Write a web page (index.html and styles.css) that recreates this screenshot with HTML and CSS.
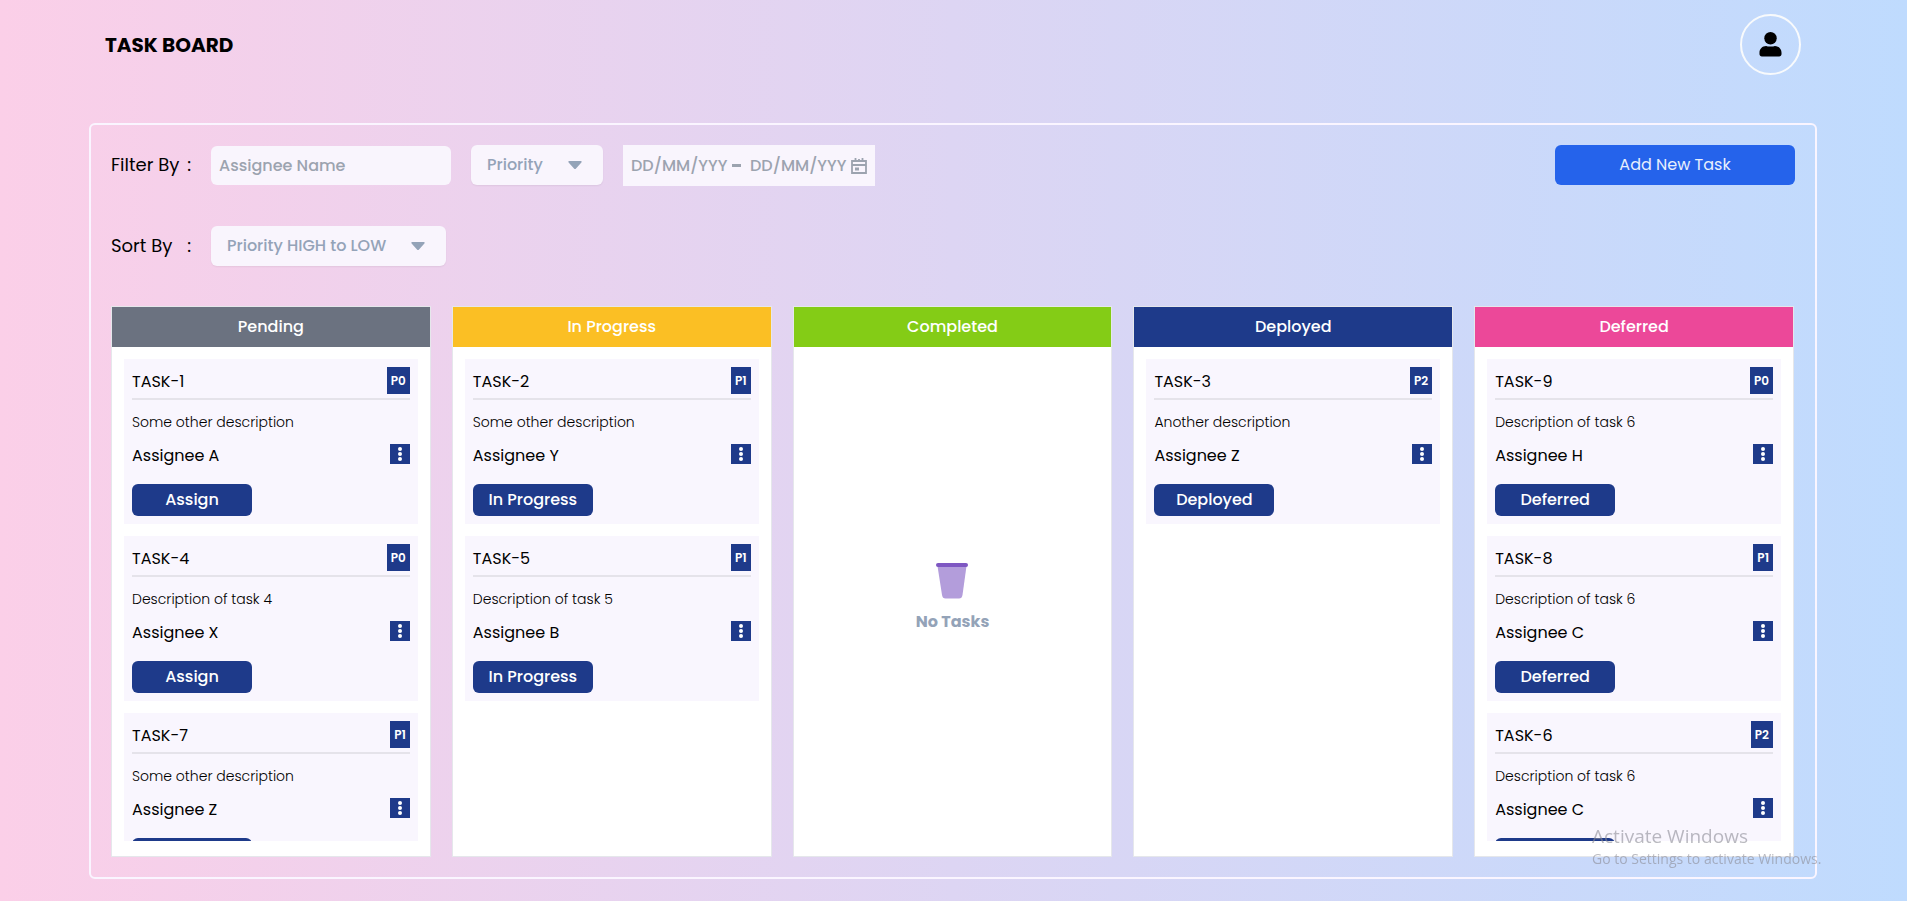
FILE: index.html
```html
<!DOCTYPE html>
<html lang="en">
<head>
<meta charset="utf-8">
<meta name="viewport" content="width=device-width, initial-scale=1">
<title>Task Board</title>
<link rel="stylesheet" href="styles.css">
</head>
<body>
<svg class="sprite" aria-hidden="true">
  <symbol id="dots" viewBox="0 0 20 20"><circle cx="10" cy="5" r="2"/><circle cx="10" cy="10" r="2"/><circle cx="10" cy="15" r="2"/></symbol>
  <symbol id="caret" viewBox="0 0 14 8"><path d="M1.2 0h11.6c.9 0 1.2.9.6 1.5L8 7.4c-.6.7-1.400.7-2 0L.6 1.5C0 .9.300 0 1.200 0z"/></symbol>
</svg>
<div class="app">
  <header class="header">
    <h1 class="title">TASK BOARD</h1>
    <button class="avatar" type="button" aria-label="Profile">
      <svg width="23" height="25" viewBox="0 0 24 26"><circle cx="12" cy="6.500" r="6.500"/><path d="M7.500 14.500c1.500.9 7.500.9 9 0 4 0 7 3 7 7v1.500c0 1.500-1 2.500-2.500 2.500H3C1.500 25.500.5 24.500.5 23v-1.500c0-4 3-7 7-7z"/></svg>
    </button>
  </header>
  <main class="board">
    <div class="toolbar">
      <label class="label" for="assignee"><span>Filter By</span><span>:</span></label>
      <input class="field assignee" id="assignee" type="text" placeholder="Assignee Name">
      <div class="picker">
        <select class="select" aria-label="Priority"><option>Priority</option></select>
        <svg class="caret"><use href="#caret"/></svg>
      </div>
      <div class="dates">
        <input class="date" type="text" placeholder="DD/MM/YYY" aria-label="Start date">
        <span class="dash"></span>
        <input class="date" type="text" placeholder="DD/MM/YYY" aria-label="End date">
        <svg class="calendar" width="16" height="16" viewBox="0 0 16 16"><path d="M1 3h14v12H1zM1 7h14M4.500 0v4M11.500 0v4M8 1v3" fill="none" stroke="currentColor" stroke-width="1.800"/><path d="M4 9.500h4v3H4z" fill="currentColor"/></svg>
      </div>
      <button class="add" type="button">Add New Task</button>
    </div>
    <div class="toolbar">
      <label class="label" for="sort"><span>Sort By</span><span>:</span></label>
      <div class="picker wide">
        <select class="select" id="sort"><option>Priority HIGH to LOW</option></select>
        <svg class="caret"><use href="#caret"/></svg>
      </div>
    </div>
    <div class="columns">
      <section class="column">
        <h2 class="heading gray">Pending</h2>
        <div class="list">
          <article class="card"><div class="top"><h3>TASK-1</h3><span class="badge">P0</span></div><p class="desc">Some other description</p><div class="who"><span>Assignee A</span><button class="menu" type="button" aria-label="Options"><svg><use href="#dots"/></svg></button></div><button class="status" type="button">Assign</button></article>
          <article class="card"><div class="top"><h3>TASK-4</h3><span class="badge">P0</span></div><p class="desc">Description of task 4</p><div class="who"><span>Assignee X</span><button class="menu" type="button" aria-label="Options"><svg><use href="#dots"/></svg></button></div><button class="status" type="button">Assign</button></article>
          <article class="card"><div class="top"><h3>TASK-7</h3><span class="badge">P1</span></div><p class="desc">Some other description</p><div class="who"><span>Assignee Z</span><button class="menu" type="button" aria-label="Options"><svg><use href="#dots"/></svg></button></div><button class="status" type="button">Assign</button></article>
        </div>
      </section>
      <section class="column">
        <h2 class="heading amber">In Progress</h2>
        <div class="list">
          <article class="card"><div class="top"><h3>TASK-2</h3><span class="badge">P1</span></div><p class="desc">Some other description</p><div class="who"><span>Assignee Y</span><button class="menu" type="button" aria-label="Options"><svg><use href="#dots"/></svg></button></div><button class="status" type="button">In Progress</button></article>
          <article class="card"><div class="top"><h3>TASK-5</h3><span class="badge">P1</span></div><p class="desc">Description of task 5</p><div class="who"><span>Assignee B</span><button class="menu" type="button" aria-label="Options"><svg><use href="#dots"/></svg></button></div><button class="status" type="button">In Progress</button></article>
        </div>
      </section>
      <section class="column">
        <h2 class="heading lime">Completed</h2>
        <div class="empty">
          <svg width="32" height="36" viewBox="0 0 32 36"><path d="M1.500 3h29L26.500 32c-.4 2.500-1.500 3.500-3.500 3.500H9.500c-2 0-3.100-1-3.500-3.500z" fill="#b39ddb"/><rect width="32" height="4" rx="2" fill="#7e57c2"/></svg>
          <p>No Tasks</p>
        </div>
      </section>
      <section class="column">
        <h2 class="heading navy">Deployed</h2>
        <div class="list">
          <article class="card"><div class="top"><h3>TASK-3</h3><span class="badge">P2</span></div><p class="desc">Another description</p><div class="who"><span>Assignee Z</span><button class="menu" type="button" aria-label="Options"><svg><use href="#dots"/></svg></button></div><button class="status" type="button">Deployed</button></article>
        </div>
      </section>
      <section class="column">
        <h2 class="heading pink">Deferred</h2>
        <div class="list">
          <article class="card"><div class="top"><h3>TASK-9</h3><span class="badge">P0</span></div><p class="desc">Description of task 6</p><div class="who"><span>Assignee H</span><button class="menu" type="button" aria-label="Options"><svg><use href="#dots"/></svg></button></div><button class="status" type="button">Deferred</button></article>
          <article class="card"><div class="top"><h3>TASK-8</h3><span class="badge">P1</span></div><p class="desc">Description of task 6</p><div class="who"><span>Assignee C</span><button class="menu" type="button" aria-label="Options"><svg><use href="#dots"/></svg></button></div><button class="status" type="button">Deferred</button></article>
          <article class="card"><div class="top"><h3>TASK-6</h3><span class="badge">P2</span></div><p class="desc">Description of task 6</p><div class="who"><span>Assignee C</span><button class="menu" type="button" aria-label="Options"><svg><use href="#dots"/></svg></button></div><button class="status" type="button">Deferred</button></article>
        </div>
      </section>
    </div>
  </main>
</div>
<aside class="watermark"><p class="big">Activate Windows</p><p class="small">Go to Settings to activate Windows.</p></aside>
</body>
</html>
```
FILE: styles.css
```css
* { box-sizing: border-box; }
body { margin: 0; font: 16px/24px Poppins, Inter, sans-serif; color: #000; }
h1, h2, h3, p { margin: 0; font-size: inherit; font-weight: inherit; }
button, input, select { font: inherit; border: 0; margin: 0; padding: 0; }
.sprite { position: absolute; width: 0; height: 0; }
.app { height: 100vh; display: flex; flex-direction: column; padding: 0 90px 22px 89px; background: linear-gradient(to right, #fbcfe8, #bfdbfe); }
.header { flex: none; display: flex; align-items: center; justify-content: space-between; padding: 14px 16px 48px; }
.title { font-size: 20px; line-height: 28px; font-weight: 700; }
.avatar { width: 61px; height: 61px; border: 2px solid #f8fafc; border-radius: 50%; background: none; display: grid; place-items: center; }
.board { flex: 1; min-height: 0; display: flex; flex-direction: column; border: 2px solid #faf5ff; border-radius: 6px; padding: 20px; }
.toolbar { display: flex; align-items: flex-start; margin-bottom: 40px; flex: none; }
.label { width: 80px; margin-right: 20px; display: flex; justify-content: space-between; font-size: 18px; line-height: 40px; white-space: nowrap; }
.field, .select, .dates { background: #f9f5fd; color: #94a3b8; font-weight: 500; }
.assignee { width: 240px; height: 39px; border-radius: 6px; padding: 0 8px; margin: 1px 20px 0 0; }
::placeholder { color: #9ca3af; opacity: 1; }
.picker { position: relative; width: 132px; height: 40px; margin-right: 20px; }
.picker.wide { width: 235px; }
.select { appearance: none; width: 100%; height: 100%; border-radius: 6px; padding: 0 36px 0 16px; box-shadow: 0 1px 2px rgba(0,0,0,.06); }
.caret { position: absolute; right: 21px; top: 16px; width: 14px; height: 8px; fill: #94a3b8; pointer-events: none; }
.dates { width: 252px; height: 41px; display: flex; align-items: center; padding: 0 8px; color: #9ca3af; }
.date { width: 98px; background: none; font-weight: 500; }
.dash { width: 9px; height: 3px; margin: 0 9px 0 3px; background: #9ca3af; }
.calendar { margin-left: 3px; flex: none; }
.add { width: 240px; height: 40px; margin-left: auto; border-radius: 6px; background: #2563eb; color: #e8effd; }
.columns { flex: 1; min-height: 0; display: grid; grid-template-columns: repeat(5, 1fr); grid-template-rows: minmax(0, 1fr); gap: 21px; padding-right: 1px; }
.column { display: flex; flex-direction: column; background: #fff; border: 1px solid #e5e7eb; min-width: 0; }
.heading { flex: none; height: 40px; line-height: 40px; text-align: center; color: #fff; font-weight: 500; }
.gray { background: #6b7280; }
.amber { background: #fbbf24; }
.lime { background: #84cc16; }
.navy { background: #1e3a8a; }
.pink { background: #ec4899; }
.list { flex: 1; min-height: 0; overflow-y: auto; scrollbar-width: none; display: flex; flex-direction: column; gap: 12px; margin: 12px 12px 15px; }
.card { flex: none; padding: 8px; background: #f9f6fe; }
.top { display: flex; align-items: flex-start; justify-content: space-between; border-bottom: 2px solid #e5e3ea; padding-bottom: 4px; }
.top h3 { line-height: 30px; height: 27px; }
.badge { height: 27px; line-height: 27px; padding: 0 4px; background: #1e3a8a; color: #fff; font-size: 12px; font-weight: 600; }
.desc { margin-top: 12px; font-size: 14px; line-height: 20px; font-weight: 300; }
.who { display: flex; align-items: flex-start; justify-content: space-between; height: 24px; margin: 12px 0 16px; line-height: 24px; }
.menu { width: 20px; height: 20px; background: #1e3a8a; }
.menu svg { display: block; width: 20px; height: 20px; fill: #fff; }
.status { display: block; width: 120px; height: 32px; border-radius: 6px; background: #1e3a8a; color: #fff; font-weight: 500; }
.empty { flex: 1; display: flex; flex-direction: column; align-items: center; justify-content: center; gap: 11px; padding-bottom: 7px; color: #94a3b8; font-weight: 700; }
.watermark { position: fixed; right: 79px; bottom: 32px; width: 236px; color: rgba(140, 140, 150, .6); font-family: "Open Sans", sans-serif; pointer-events: none; white-space: nowrap; }
.big { font-size: 19px; line-height: 26px; }
.small { font-size: 14px; line-height: 20px; }
```
